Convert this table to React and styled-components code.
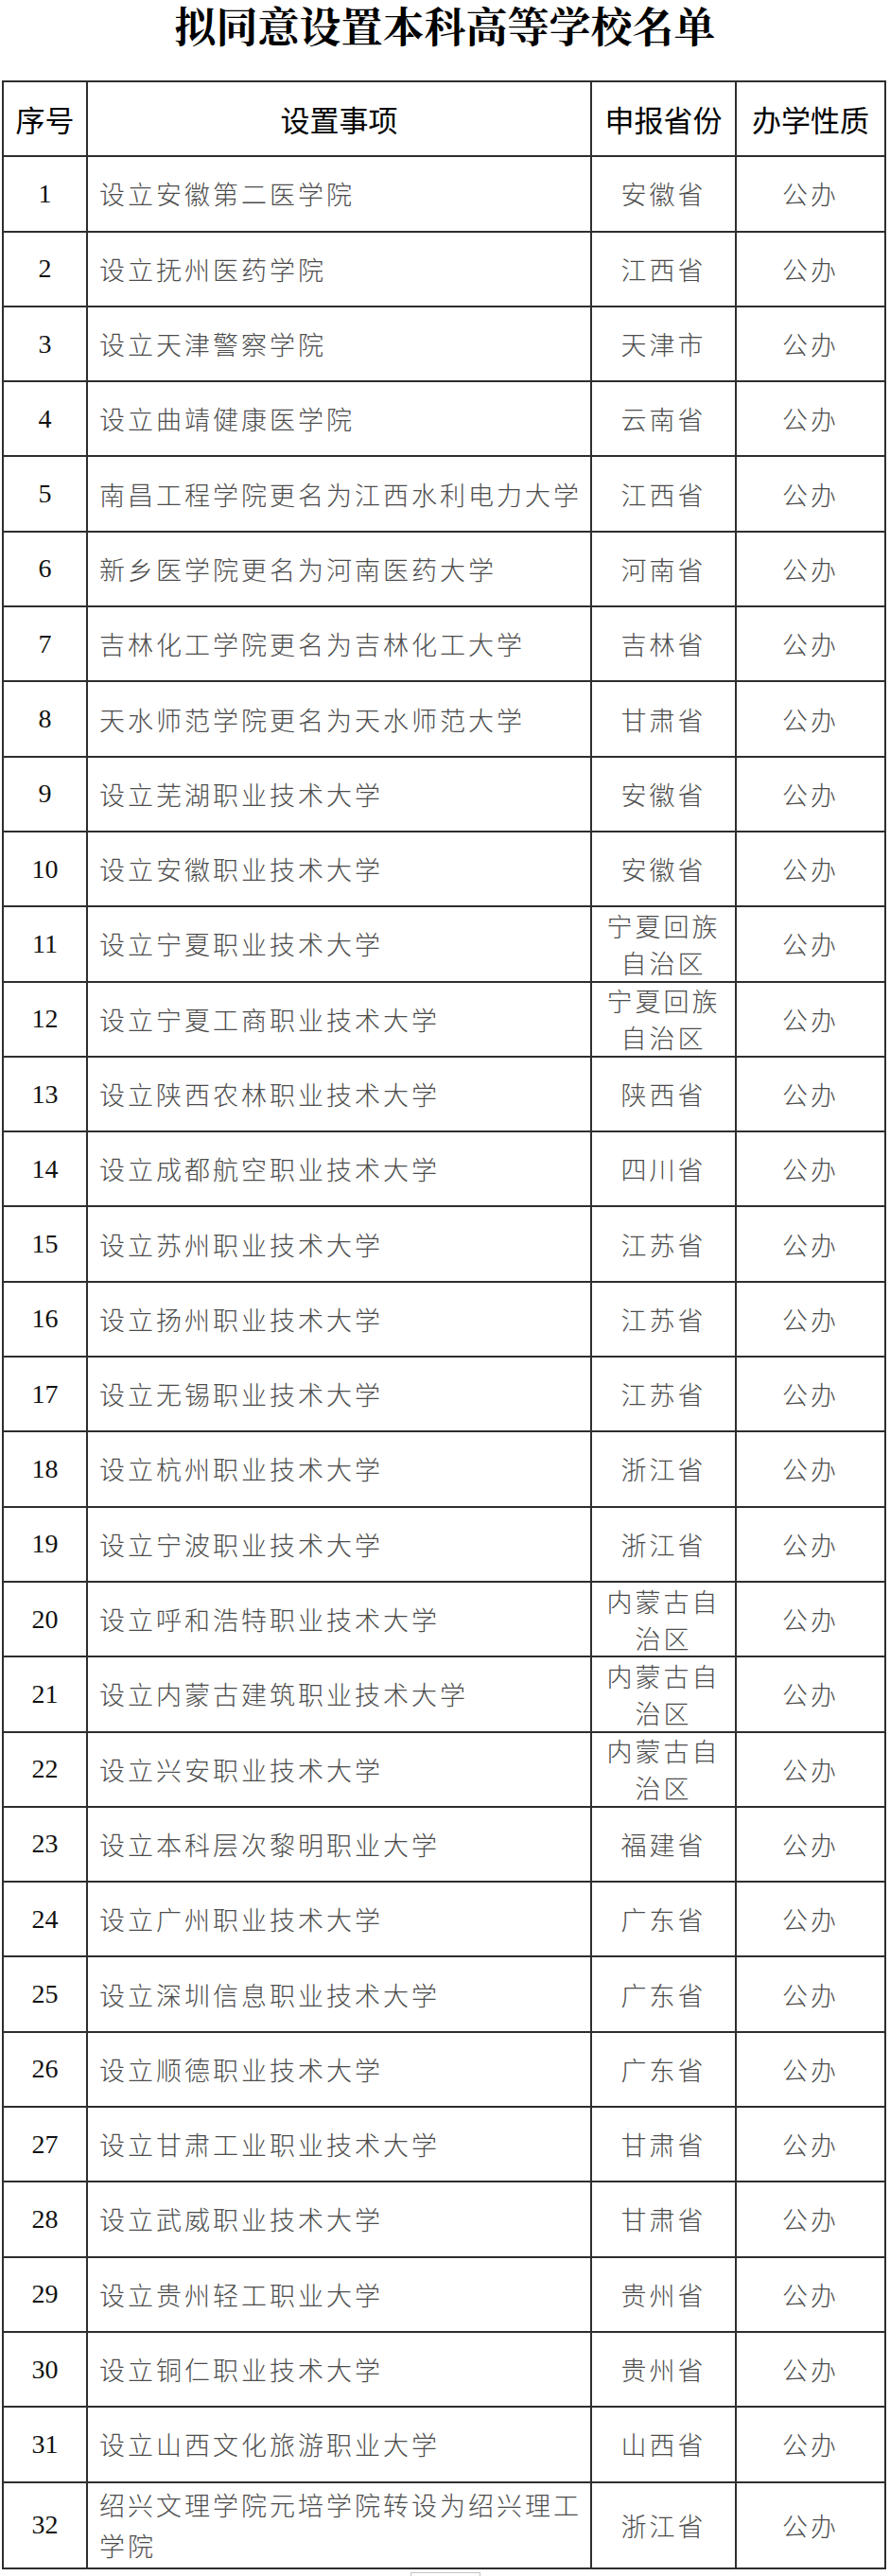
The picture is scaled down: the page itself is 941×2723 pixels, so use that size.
import styled, { createGlobalStyle } from "styled-components";

const rows = [
  ["设立安徽第二医学院", "安徽省"],
  ["设立抚州医药学院", "江西省"],
  ["设立天津警察学院", "天津市"],
  ["设立曲靖健康医学院", "云南省"],
  ["南昌工程学院更名为江西水利电力大学", "江西省"],
  ["新乡医学院更名为河南医药大学", "河南省"],
  ["吉林化工学院更名为吉林化工大学", "吉林省"],
  ["天水师范学院更名为天水师范大学", "甘肃省"],
  ["设立芜湖职业技术大学", "安徽省"],
  ["设立安徽职业技术大学", "安徽省"],
  ["设立宁夏职业技术大学", "宁夏回族自治区"],
  ["设立宁夏工商职业技术大学", "宁夏回族自治区"],
  ["设立陕西农林职业技术大学", "陕西省"],
  ["设立成都航空职业技术大学", "四川省"],
  ["设立苏州职业技术大学", "江苏省"],
  ["设立扬州职业技术大学", "江苏省"],
  ["设立无锡职业技术大学", "江苏省"],
  ["设立杭州职业技术大学", "浙江省"],
  ["设立宁波职业技术大学", "浙江省"],
  ["设立呼和浩特职业技术大学", "内蒙古自治区"],
  ["设立内蒙古建筑职业技术大学", "内蒙古自治区"],
  ["设立兴安职业技术大学", "内蒙古自治区"],
  ["设立本科层次黎明职业大学", "福建省"],
  ["设立广州职业技术大学", "广东省"],
  ["设立深圳信息职业技术大学", "广东省"],
  ["设立顺德职业技术大学", "广东省"],
  ["设立甘肃工业职业技术大学", "甘肃省"],
  ["设立武威职业技术大学", "甘肃省"],
  ["设立贵州轻工职业大学", "贵州省"],
  ["设立铜仁职业技术大学", "贵州省"],
  ["设立山西文化旅游职业大学", "山西省"],
  ["绍兴文理学院元培学院转设为绍兴理工学院", "浙江省"],
];

const GlobalStyle = createGlobalStyle`
  body {
    margin: 0;
    background: #fff;
  }
`;

const App = () => {
  return (
    <Page>
      <GlobalStyle />
      <Title>拟同意设置本科高等学校名单</Title>
      <Table>
        <HeadCell>序号</HeadCell>
        <HeadCell>设置事项</HeadCell>
        <HeadCell>申报省份</HeadCell>
        <HeadCell>办学性质</HeadCell>
        {rows.map(([task, province], i) => (
          <Row key={i}>
            <NumCell>{i + 1}</NumCell>
            <TaskCell>{task}</TaskCell>
            <TextCell>{province}</TextCell>
            <TextCell>公办</TextCell>
          </Row>
        ))}
      </Table>
      <PageMark />
    </Page>
  );
};

const Page = styled.div`
  width: 941px;
  height: 2723px;
  overflow: hidden;
`;

const Title = styled.h1`
  margin: 0 0 33px;
  height: 52px;
  line-height: 52px;
  text-align: center;
  font-family: "Noto Serif CJK SC", "Noto Sans CJK SC", serif;
  font-size: 44px;
  font-weight: 700;
  letter-spacing: 0;
  color: #000;
`;

const Table = styled.div`
  display: grid;
  grid-template-columns: 87px 531px 151px 156px;
  grid-template-rows: repeat(32, 77.3px) 89px;
  gap: 2px;
  padding: 2px;
  margin-left: 2px;
  width: 935px;
  box-sizing: border-box;
  background: #2e2e2e;
`;

const Row = styled.div`
  display: contents;
`;

const Cell = styled.div`
  background: #fff;
  display: flex;
  align-items: center;
  justify-content: center;
  overflow: hidden;
  text-align: center;
`;

const HeadCell = styled(Cell)`
  font-family: "Noto Sans CJK SC", sans-serif;
  font-size: 31px;
  font-weight: 400;
  color: #000;
`;

const NumCell = styled(Cell)`
  font-family: "Liberation Serif", serif;
  font-size: 28px;
  color: #111;
`;

const TextCell = styled(Cell)`
  padding: 0 10px;
  font-family: "Noto Sans CJK SC", sans-serif;
  font-size: 27px;
  font-weight: 300;
  line-height: 39px;
  letter-spacing: 3px;
  color: #4d4d4d;
`;

const TaskCell = styled(TextCell)`
  justify-content: flex-start;
  text-align: left;
  padding: 0 8px 0 12px;
  line-height: 43px;
`;

const PageMark = styled.div`
  width: 72px;
  height: 10px;
  margin: 3px auto 0;
  border: 1px solid #c4c4c4;
  border-bottom: none;
`;

export default App;
